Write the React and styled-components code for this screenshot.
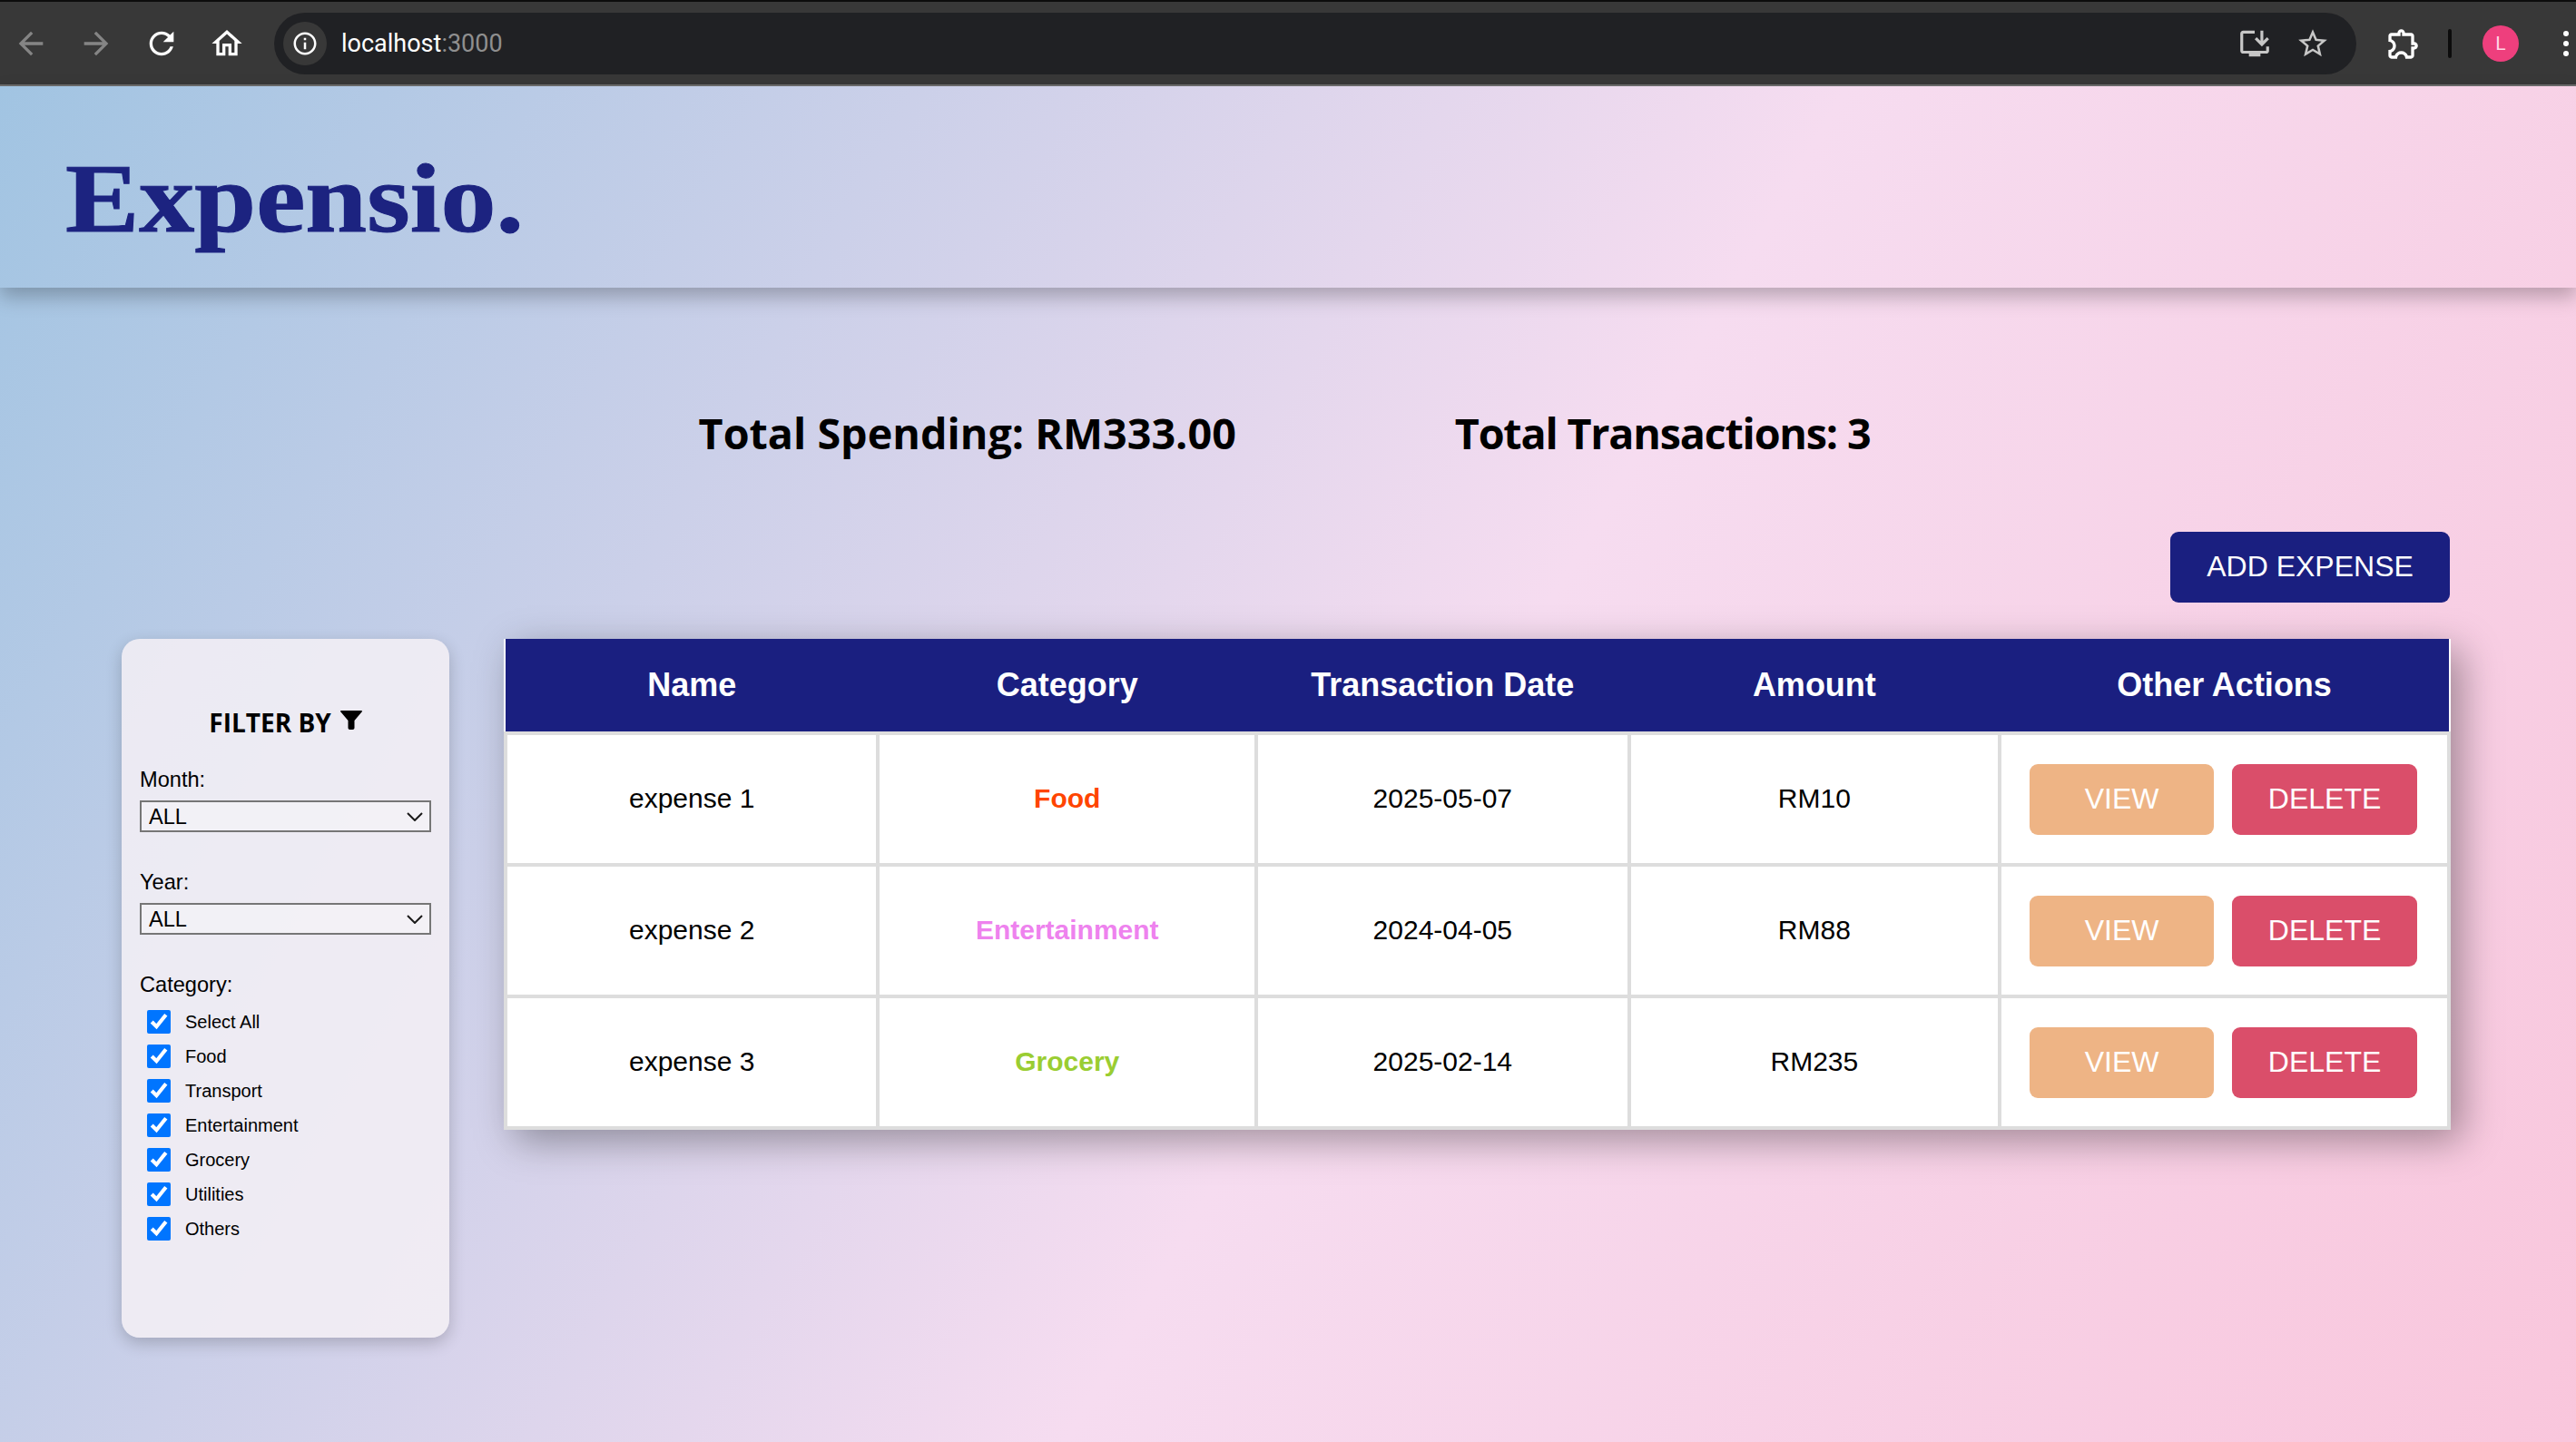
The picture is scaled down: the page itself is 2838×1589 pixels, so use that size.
import React from 'react';
import styled, { createGlobalStyle } from 'styled-components';

const GlobalStyle = createGlobalStyle`
  html, body {
    margin: 0;
    padding: 0;
    height: 100%;
    overflow: hidden;
    background: #383838;
  }
  #root {
    height: 100%;
  }
`;

const chevron = encodeURIComponent(
  '<svg xmlns="http://www.w3.org/2000/svg" width="18" height="10" viewBox="0 0 18 10"><path d="M1 1l8 8 8-8" fill="none" stroke="#1a1a1a" stroke-width="2"/></svg>'
);

const Window = styled.div`
  display: flex;
  flex-direction: column;
  height: 1589px;
  font-family: 'Liberation Sans', Arial, sans-serif;
`;

/* browser chrome */
const Toolbar = styled.div`
  display: flex;
  align-items: center;
  gap: 32px;
  flex: none;
  box-sizing: border-box;
  height: 95px;
  padding: 0 8px 0 14px;
  background: #383838;
  border-top: 2px solid #0c0c0c;
  border-bottom: 2px solid #6d6d6d;
`;

const ToolIcon = styled.svg`
  flex: none;
  width: 40px;
  height: 40px;
  fill: ${({ $dim }) => ($dim ? '#858585' : '#ffffff')};
`;

const AddressBar = styled.div`
  flex: 1;
  display: flex;
  align-items: center;
  height: 68px;
  padding: 0 29px 0 10px;
  border-radius: 34px;
  background: #202124;
`;

const InfoBadge = styled.div`
  display: flex;
  align-items: center;
  justify-content: center;
  width: 48px;
  height: 48px;
  border-radius: 50%;
  background: #383838;
  svg {
    width: 30px;
    height: 30px;
    fill: #ffffff;
  }
`;

const Url = styled.div`
  margin-left: 16px;
  flex: 1;
  font-family: Roboto, sans-serif;
  font-size: 27px;
  color: #ffffff;
  span {
    color: #8f8f8f;
  }
`;

const BarIcon = styled.svg`
  flex: none;
  width: 38px;
  height: 38px;
  margin-left: 26px;
  fill: #c7c7c7;
`;

const Separator = styled.div`
  flex: none;
  width: 4px;
  height: 32px;
  margin: 0 -1px 0 -3px;
  border-radius: 2px;
  background: #0c0c0c;
`;

const Avatar = styled.div`
  flex: none;
  display: flex;
  align-items: center;
  justify-content: center;
  width: 40px;
  height: 40px;
  margin-left: 3px;
  border-radius: 50%;
  background: #ee3f7d;
  color: #ffd6e6;
  font-family: Roboto, sans-serif;
  font-size: 21px;
`;

const Dots = styled.div`
  flex: none;
  display: flex;
  flex-direction: column;
  gap: 5px;
  margin-left: 17px;
  i {
    width: 6px;
    height: 6px;
    border-radius: 50%;
    background: #ffffff;
  }
`;

/* page */
const Page = styled.div`
  flex: 1;
  background: linear-gradient(120deg, #a1c4e2 0%, #f6dcf0 55%, #f9c6dc 100%);
`;

const Header = styled.header`
  display: flex;
  align-items: center;
  box-sizing: border-box;
  height: 222px;
  padding: 26px 0 0 72px;
  box-shadow: 0 10px 20px rgba(0, 0, 0, 0.25);
`;

const Logo = styled.h1`
  margin: 0;
  font-family: 'Liberation Serif', 'Times New Roman', serif;
  font-size: 107px;
  font-weight: 700;
  line-height: 1;
  color: #1c2380;
  -webkit-text-stroke: 1px #1c2380;
  transform: scaleX(1.14);
  transform-origin: left center;
`;

const Totals = styled.div`
  display: flex;
  justify-content: center;
  gap: 241px;
  margin-top: 126px;
  padding-right: 8px;
  font-family: 'Open Sans', sans-serif;
  font-size: 46.7px;
  font-weight: 700;
  line-height: 68px;
  color: #000000;
`;

const TotalLabel = styled.span`
  letter-spacing: ${({ $tracking }) => $tracking || 0}px;
`;

const ActionRow = styled.div`
  display: flex;
  justify-content: flex-end;
  margin-top: 75px;
  padding-right: 139px;
`;

const Button = styled.button`
  box-sizing: border-box;
  width: ${({ $width }) => $width}px;
  height: 78px;
  padding: 0 0 1px;
  border: none;
  border-radius: 9px;
  background: ${({ $bg }) => $bg};
  color: #ffffff;
  font-family: 'Liberation Sans', Arial, sans-serif;
  font-size: 32px;
`;

const Content = styled.div`
  display: flex;
  align-items: flex-start;
  gap: 60px;
  margin-top: 40px;
  padding: 0 138px 0 134px;
`;

const Sidebar = styled.aside`
  flex: none;
  box-sizing: border-box;
  width: 361px;
  height: 770px;
  padding: 72px 20px 0;
  border-radius: 20px;
  background: rgba(245, 240, 245, 0.85);
  box-shadow: 0 6px 18px rgba(0, 0, 0, 0.2);
  color: #000000;
`;

const FilterTitle = styled.h3`
  display: flex;
  align-items: center;
  justify-content: center;
  gap: 10px;
  margin: 0 0 30px;
  font-family: 'Open Sans', sans-serif;
  font-size: 28px;
  font-weight: 700;
  line-height: 40px;
  svg {
    width: 24px;
    height: 21px;
    margin-top: -6px;
  }
`;

const FieldLabel = styled.label`
  display: block;
  margin-bottom: 9px;
  font-size: 23.6px;
  line-height: 27px;
`;

const Select = styled.select`
  display: block;
  box-sizing: border-box;
  width: 100%;
  height: 35px;
  margin-bottom: 42px;
  padding: 0 0 0 8px;
  appearance: none;
  font-family: 'Liberation Sans', Arial, sans-serif;
  font-size: 23.6px;
  color: #000000;
  background: rgba(255, 255, 255, 0.3) url("data:image/svg+xml,${chevron}") no-repeat right 7px center;
  border: 2px solid #767676;
  border-radius: 0;
`;

const CheckList = styled.div`
  display: flex;
  flex-direction: column;
  gap: 12px;
  margin-top: 14px;
  padding-left: 8px;
`;

const CheckRow = styled.label`
  display: flex;
  align-items: center;
  gap: 16px;
  height: 26px;
  font-size: 20px;
  input {
    width: 26px;
    height: 26px;
    margin: 0;
    accent-color: #0075ff;
  }
`;

const Table = styled.table`
  flex: 1;
  table-layout: fixed;
  border-collapse: collapse;
  background: #ffffff;
  box-shadow: 12px 12px 40px rgba(0, 0, 0, 0.35);
`;

const Col = styled.col`
  width: ${({ $width }) => $width}px;
`;

const HeadCell = styled.th`
  height: 102px;
  padding: 0;
  background: #1a1f80;
  color: #ffffff;
  font-size: 36px;
  font-weight: 700;
  text-align: center;
`;

const Cell = styled.td`
  box-sizing: border-box;
  height: 145px;
  padding: ${({ $actions }) => ($actions ? '0' : '0 0 2px')};
  border: 4px solid #dddddd;
  text-align: center;
  font-size: 30px;
  color: ${({ $color }) => $color || '#000000'};
  font-weight: ${({ $color }) => ($color ? 700 : 400)};
`;

const CellActions = styled.div`
  display: flex;
  justify-content: center;
  gap: 20px;
  padding-right: 2px;
`;

const columns = [
  { title: 'Name', width: 411 },
  { title: 'Category', width: 417 },
  { title: 'Transaction Date', width: 411 },
  { title: 'Amount', width: 409 },
  { title: 'Other Actions', width: 495 },
];

const expenses = [
  { name: 'expense 1', category: 'Food', color: '#ff4500', date: '2025-05-07', amount: 'RM10' },
  { name: 'expense 2', category: 'Entertainment', color: '#ee82ee', date: '2024-04-05', amount: 'RM88' },
  { name: 'expense 3', category: 'Grocery', color: '#9acd32', date: '2025-02-14', amount: 'RM235' },
];

const categories = ['Select All', 'Food', 'Transport', 'Entertainment', 'Grocery', 'Utilities', 'Others'];

const icons = {
  back: 'M20 11H7.83l5.59-5.59L12 4l-8 8 8 8 1.41-1.41L7.83 13H20v-2z',
  forward: 'M12 4l-1.41 1.41L16.17 11H4v2h12.17l-5.58 5.59L12 20l8-8z',
  reload:
    'M17.65 6.35C16.2 4.9 14.21 4 12 4c-4.42 0-7.99 3.58-7.99 8s3.57 8 7.99 8c3.73 0 6.84-2.55 7.73-6h-2.08c-.82 2.33-3.04 4-5.65 4-3.31 0-6-2.69-6-6s2.69-6 6-6c1.66 0 3.14.69 4.22 1.78L13 11h7V4l-2.35 2.35z',
  home: 'M12 5.69l5 4.5V18h-2v-6H9v6H7v-7.81l5-4.5M12 3L2 12h3v8h6v-6h2v6h6v-8h3L12 3z',
  info: 'M11 7h2v2h-2zm0 4h2v6h-2zm1-9C6.48 2 2 6.48 2 12s4.48 10 10 10 10-4.48 10-10S17.52 2 12 2zm0 18c-4.41 0-8-3.59-8-8s3.59-8 8-8 8 3.59 8 8-3.59 8-8 8z',
  install: 'M20 17H4V5h8V3H4c-1.11 0-2 .89-2 2v12c0 1.1.89 2 2 2h4v2h8v-2h4c1.1 0 2-.9 2-2v-3h-2v3zM17 14l5-5-1.41-1.41L18 10.17V3h-2v7.17l-2.59-2.58L12 9l5 5z',
  star: 'M22 9.24l-7.19-.62L12 2 9.19 8.63 2 9.24l5.46 4.73L5.82 21 12 17.27 18.18 21l-1.63-7.03L22 9.24zM12 15.4l-3.76 2.27 1-4.28-3.32-2.88 4.38-.38L12 6.1l1.71 4.04 4.38.38-3.32 2.88 1 4.28L12 15.4z',
  puzzle:
    'M10.5 4.5c.28 0 .5.22.5.5v2h6v6h2c.28 0 .5.22.5.5s-.22.5-.5.5h-2v6h-2.12c-.68-1.75-2.39-3-4.38-3s-3.7 1.25-4.38 3H4v-2.12c1.75-.68 3-2.39 3-4.38 0-1.99-1.24-3.7-2.99-4.38L4 7h6V5c0-.28.22-.5.5-.5m0-2C9.12 2.5 8 3.62 8 5H4c-1.1 0-1.99.9-1.99 2v3.8h.29c1.49 0 2.7 1.21 2.7 2.7s-1.21 2.7-2.7 2.7H2V20c0 1.1.9 2 2 2h3.8v-.3c0-1.49 1.21-2.7 2.7-2.7s2.7 1.21 2.7 2.7v.3H17c1.1 0 2-.9 2-2v-4c1.38 0 2.5-1.12 2.5-2.5S20.38 11 19 11V7c0-1.1-.9-2-2-2h-4c0-1.38-1.12-2.5-2.5-2.5z',
};

const Glyph = ({ name, as: Comp = ToolIcon, ...rest }) => (
  <Comp viewBox="0 0 24 24" {...rest}>
    <path d={icons[name]} />
  </Comp>
);

const Funnel = () => (
  <svg viewBox="0 0 24 21">
    <path d="M.8 0h22.4c.7 0 1 .8.6 1.3L15.5 11v8c0 1.2-.8 2-2 2h-3c-1.2 0-2-.8-2-2v-8L.2 1.3C-.2.8.1 0 .8 0z" />
  </svg>
);

const App = () => (
  <Window>
    <GlobalStyle />
    <Toolbar>
      <Glyph name="back" $dim />
      <Glyph name="forward" $dim />
      <Glyph name="reload" />
      <Glyph name="home" />
      <AddressBar>
        <InfoBadge>
          <svg viewBox="0 0 24 24">
            <path d={icons.info} />
          </svg>
        </InfoBadge>
        <Url>
          localhost<span>:3000</span>
        </Url>
        <Glyph name="install" as={BarIcon} />
        <Glyph name="star" as={BarIcon} />
      </AddressBar>
      <Glyph name="puzzle" />
      <Separator />
      <Avatar>L</Avatar>
      <Dots>
        <i />
        <i />
        <i />
      </Dots>
    </Toolbar>
    <Page>
      <Header>
        <Logo>Expensio.</Logo>
      </Header>
      <Totals>
        <TotalLabel>Total Spending: RM333.00</TotalLabel>
        <TotalLabel $tracking={-1.2}>Total Transactions: 3</TotalLabel>
      </Totals>
      <ActionRow>
        <Button $width={308} $bg="#1a1f80">
          ADD EXPENSE
        </Button>
      </ActionRow>
      <Content>
        <Sidebar>
          <FilterTitle>
            FILTER BY <Funnel />
          </FilterTitle>
          <FieldLabel htmlFor="month">Month:</FieldLabel>
          <Select id="month" defaultValue="ALL">
            <option>ALL</option>
          </Select>
          <FieldLabel htmlFor="year">Year:</FieldLabel>
          <Select id="year" defaultValue="ALL">
            <option>ALL</option>
          </Select>
          <FieldLabel as="div">Category:</FieldLabel>
          <CheckList>
            {categories.map((category) => (
              <CheckRow key={category}>
                <input type="checkbox" defaultChecked />
                {category}
              </CheckRow>
            ))}
          </CheckList>
        </Sidebar>
        <Table>
          <colgroup>
            {columns.map((column) => (
              <Col key={column.title} $width={column.width} />
            ))}
          </colgroup>
          <thead>
            <tr>
              {columns.map((column) => (
                <HeadCell key={column.title}>{column.title}</HeadCell>
              ))}
            </tr>
          </thead>
          <tbody>
            {expenses.map((expense) => (
              <tr key={expense.name}>
                <Cell>{expense.name}</Cell>
                <Cell $color={expense.color}>{expense.category}</Cell>
                <Cell>{expense.date}</Cell>
                <Cell>{expense.amount}</Cell>
                <Cell $actions>
                  <CellActions>
                    <Button $width={203} $bg="#eeb485">
                      VIEW
                    </Button>
                    <Button $width={204} $bg="#da4e6a">
                      DELETE
                    </Button>
                  </CellActions>
                </Cell>
              </tr>
            ))}
          </tbody>
        </Table>
      </Content>
    </Page>
  </Window>
);

export default App;
